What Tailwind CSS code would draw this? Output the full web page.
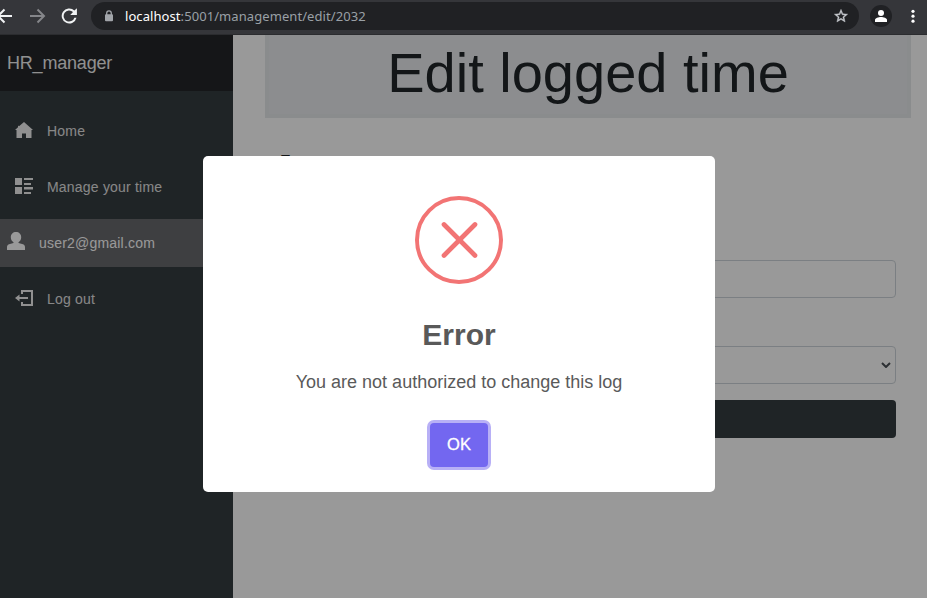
<!DOCTYPE html>
<html lang="en">
<head>
<meta charset="utf-8">
<title>HR_manager</title>
<script src="https://cdn.jsdelivr.net/npm/@tailwindcss/browser@4"></script>
</head>
<body class="h-screen overflow-hidden bg-white font-['Liberation_Sans',Arial,sans-serif] flex flex-col">
<header class="h-[35px] shrink-0 bg-[#35363a] border-b border-[#2b2c2f] flex items-start relative">
  <div class="flex items-center h-8 w-[91px] shrink-0">
    <svg class="w-5 h-5 -ml-[6px]" viewBox="0 0 20 20" fill="none" stroke="#f1f3f4" stroke-width="2"><path d="M18 10H4M10.500 3.500L4 10l6.500 6.500"/></svg>
    <svg class="w-5 h-5 ml-[13px]" viewBox="0 0 20 20" fill="none" stroke="#85868a" stroke-width="2"><path d="M3 10h14M10.500 3.500L17 10l-6.500 6.500"/></svg>
    <svg class="w-5 h-5 ml-3" viewBox="0 0 24 24" fill="#f1f3f4"><path d="M18.500 5.500A9 9 0 1 0 21 14h-2.500a6.600 6.600 0 1 1-1.700-6.700L13.500 10.700H21.500V2.700z"/></svg>
  </div>
  <div class="mt-[2px] h-7 w-[768px] rounded-full bg-[#202124] flex items-center pl-[13px] pr-[10px]">
    <svg class="w-[10px] h-3" viewBox="0 0 10 12"><path d="M2.700 5V3.200a2.300 2.300 0 0 1 4.600 0V5" fill="none" stroke="#a2a5aa" stroke-width="1.300"/><rect x="1" y="4.300" width="8" height="7" rx="1" fill="#a2a5aa"/></svg>
    <div class="ml-[11px] font-['Noto_Sans','Open_Sans',sans-serif] text-[13px] leading-7 tracking-[0.075px] text-[#9aa0a6] whitespace-nowrap"><span class="text-white">localhost</span>:5001/management/edit/2032</div>
    <svg class="ml-auto w-4 h-4" viewBox="0 0 24 24" fill="#c7cacf" stroke="#c7cacf" stroke-width=".6"><path d="M22 9.240l-7.190-.62L12 2 9.190 8.630 2 9.240l5.460 4.730L5.820 21 12 17.270 18.180 21l-1.630-7.030L22 9.240zM12 15.400l-3.760 2.270 1-4.280-3.320-2.880 4.380-.38L12 6.100l1.710 4.040 4.380.38-3.320 2.880 1 4.280L12 15.400z"/></svg>
  </div>
  <div class="ml-[11px] mt-[5px] w-[22px] h-[22px] rounded-full bg-[#202124] flex items-center justify-center">
    <svg class="w-3 h-3" viewBox="0 0 12 12" fill="#fff"><circle cx="6" cy="3" r="3"/><path d="M0 12v-2c0-2 3.500-3 6-3s6 1 6 3v2z"/></svg>
  </div>
  <svg class="ml-[19px] mt-[9px] w-1 h-[14px]" viewBox="0 0 4 14" fill="#fff"><circle cx="2" cy="2.300" r="1.600"/><circle cx="2" cy="7.200" r="1.600"/><circle cx="2" cy="12.200" r="1.600"/></svg>
</header>

<div class="flex flex-1 min-h-0">
  <aside class="w-[233px] shrink-0 bg-[#353c40]">
    <div class="h-14 bg-[#232528] pl-[7px] leading-[56px] text-lg tracking-[-0.2px] text-[#f0f0f0]">HR_manager</div>
    <nav class="pt-4 flex flex-col gap-2 text-sm tracking-[0.2px] text-[#e2e2e2]">
      <a class="h-12 flex items-center pl-[15px]"><svg class="w-[18px] h-[18px] -mt-[2px]" viewBox="0 0 18 18" fill="#f0f0f0"><path d="M9 1l9 8h-1.500v8H11v-4.500H7V17H1.500V9H0l3-2.700V4.500L4 5.300z"/></svg><span class="ml-[14px]">Home</span></a>
      <a class="h-12 flex items-center pl-[15px]"><svg class="w-[18px] h-4 -mt-[2px]" viewBox="0 0 18 16" fill="#f0f0f0"><path d="M0 0h7v7H0zM0 9h7v7H0zM9 0h9v2H9zM9 5h7v2H9zM9 9h9v2.500H9zM9 14h7v2H9z"/></svg><span class="ml-[14px]">Manage your time</span></a>
      <a class="h-12 flex items-center pl-[7px] bg-[#68696d] text-[#fff]"><svg class="w-[18px] h-[18px] -mt-[4px]" viewBox="0 0 18 18" fill="#fff"><path d="M9 0c3 0 5.200 2 5.200 5.200 0 2.300-1 4-2.700 5v.8l4.500 1.300c1.500.5 2 1.600 2 3.200V18H0v-2.500c0-1.600.5-2.700 2-3.200L6.500 11v-.8c-1.700-1-2.700-2.700-2.700-5C3.800 2 6 0 9 0z"/></svg><span class="ml-[14px]">user2@gmail.com</span></a>
      <a class="h-12 flex items-center pl-[15px]"><svg class="w-[18px] h-4 -mt-[2px]" viewBox="0 0 18 16"><path d="M7 4V1h10v14H7v-3M4 8h9" fill="none" stroke="#f0f0f0" stroke-width="2"/><path d="M0 8l4.500-3.500v7z" fill="#f0f0f0"/></svg><span class="ml-[14px]">Log out</span></a>
    </nav>
  </aside>
  <main class="flex-1 pl-8 pr-4">
    <div class="h-[83px] bg-[#e9ecef] border-4 border-t-0 border-[#e7eaec] text-center"><h1 class="text-[56px] leading-[75px] text-[#212529]">Edit logged time</h1></div>
    <form class="px-[15px] pt-[32px] text-base text-[#212529]">
      <label class="block h-6 leading-6">Entry</label>
      <div class="mt-[86px] h-[38px] border border-[#ced4da] rounded bg-white"></div>
      <div class="mt-12 h-[38px] border border-[#ced4da] rounded bg-white flex items-center justify-end pr-1">
        <svg class="w-[10px] h-[6px]" viewBox="0 0 10 6" fill="none" stroke="#4a5055" stroke-width="2"><path d="M1 1l4 4 4-4"/></svg>
      </div>
      <div class="mt-4 h-[38px] rounded bg-[#353c40]"></div>
    </form>
  </main>
</div>

<div class="absolute left-0 right-0 top-[35px] bottom-0 bg-black/40"></div>
<div role="dialog" class="absolute left-[203px] top-[156px] w-[512px] h-[336px] rounded-[5px] bg-white flex flex-col items-center pt-10">
  <svg class="w-[88px] h-[88px] shrink-0" viewBox="0 0 88 88" fill="none" stroke="#f27474"><circle cx="44" cy="44" r="42" stroke-width="4"/><path d="M29 28.500l31 31M60 28.500l-31 31" stroke-width="4.700" stroke-linecap="round"/></svg>
  <h2 class="mt-[31px] text-[30px] leading-[40px] font-bold text-[#595959]">Error</h2>
  <p class="mt-4 text-lg leading-[22px] text-[#5a5a5a]">You are not authorized to change this log</p>
  <button class="mt-[30px] w-[58px] h-[44px] rounded-[4px] bg-[#7367f0] ring-3 ring-[#b8b0f6] text-white text-[16.500px] pb-[2px] [-webkit-text-stroke:0.3px_white]">OK</button>
</div>
</body>
</html>
